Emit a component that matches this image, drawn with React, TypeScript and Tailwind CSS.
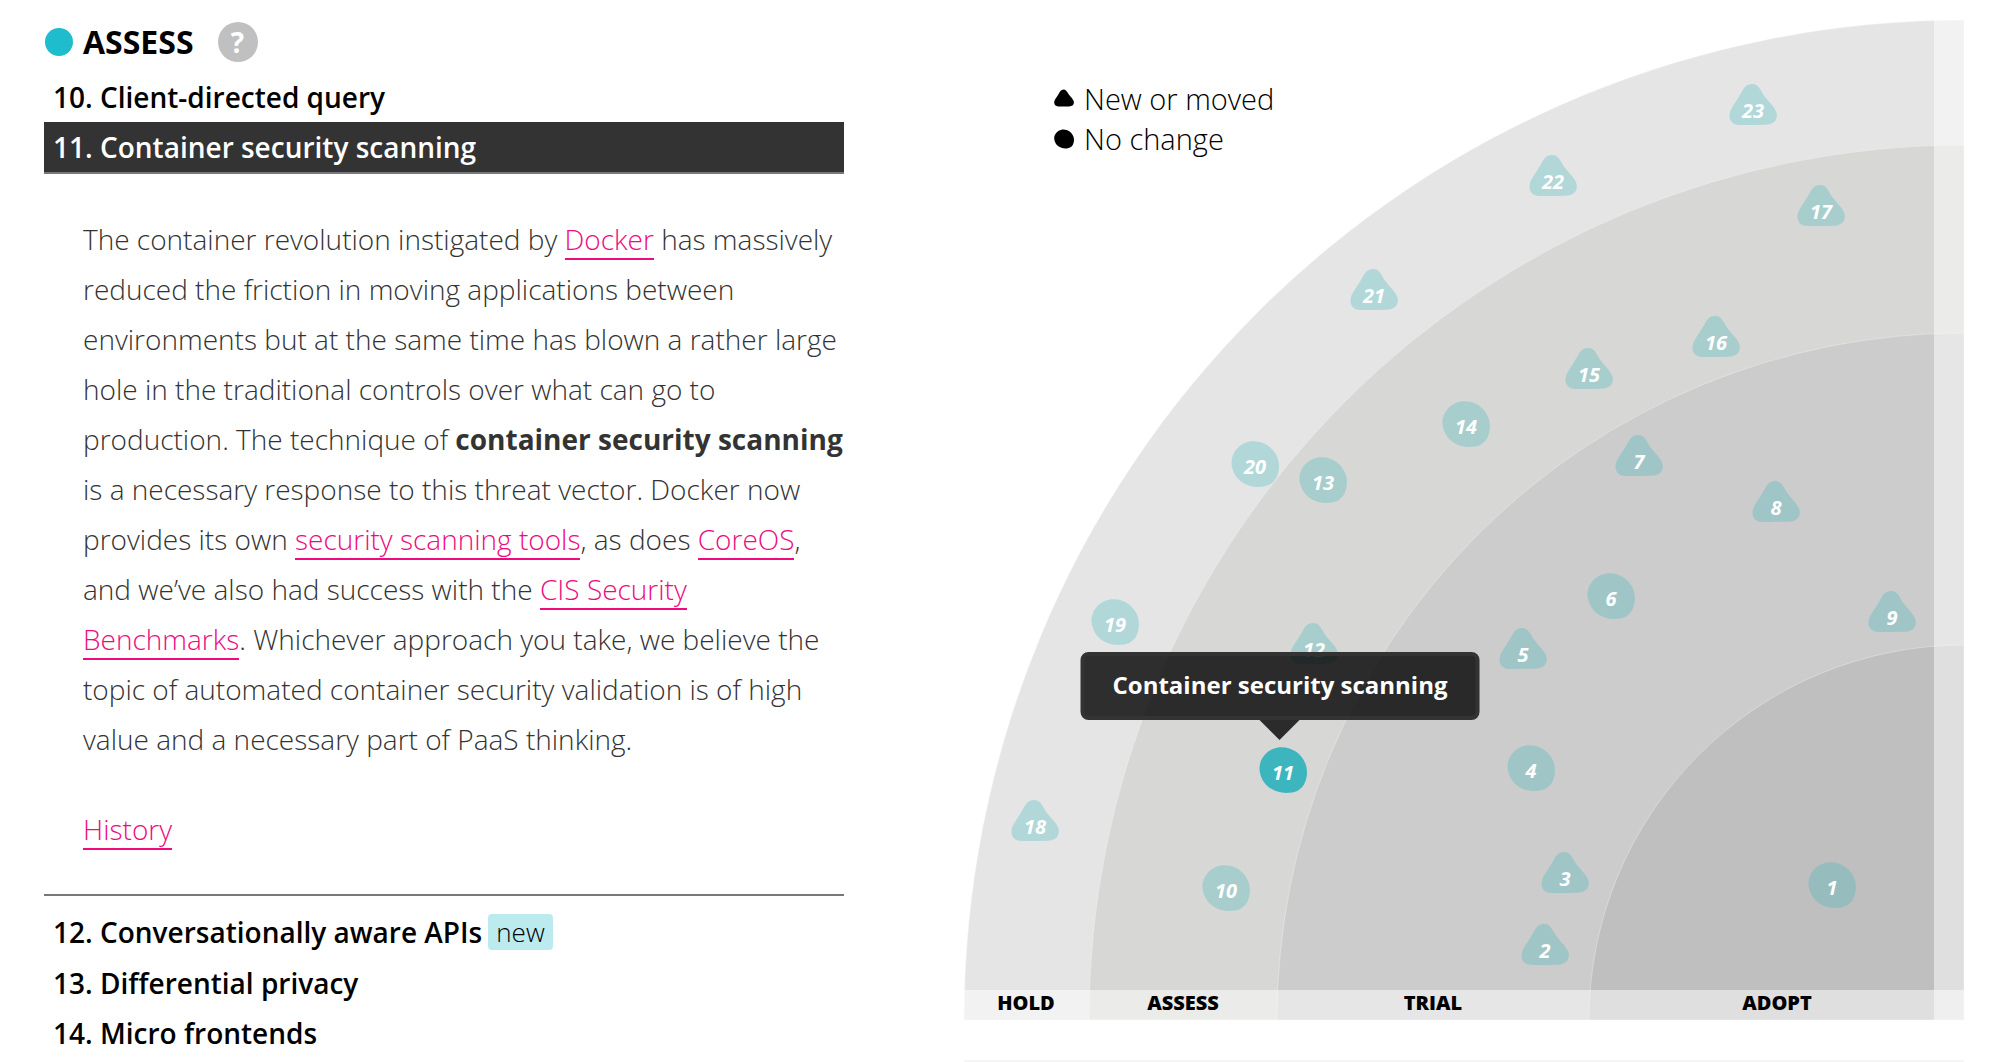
type Blip = { n: number; x: number; y: number; moved: boolean };

const blips: Blip[] = [
  { n: 1, x: 868, y: 865, moved: false },
  { n: 2, x: 581, y: 927, moved: true },
  { n: 3, x: 601, y: 855, moved: true },
  { n: 4, x: 567, y: 748, moved: false },
  { n: 5, x: 559, y: 631, moved: true },
  { n: 6, x: 647, y: 576, moved: false },
  { n: 7, x: 675, y: 438, moved: true },
  { n: 8, x: 812, y: 484, moved: true },
  { n: 9, x: 928, y: 594, moved: true },
  { n: 10, x: 262, y: 868, moved: false },
  { n: 11, x: 319, y: 750, moved: false },
  { n: 12, x: 350, y: 626, moved: true },
  { n: 13, x: 359, y: 460, moved: false },
  { n: 14, x: 502, y: 404, moved: false },
  { n: 15, x: 625, y: 351, moved: true },
  { n: 16, x: 752, y: 319, moved: true },
  { n: 17, x: 857, y: 188, moved: true },
  { n: 18, x: 71, y: 803, moved: true },
  { n: 19, x: 151, y: 602, moved: false },
  { n: 20, x: 291, y: 444, moved: false },
  { n: 21, x: 410, y: 272, moved: true },
  { n: 22, x: 589, y: 158, moved: true },
  { n: 23, x: 789, y: 87, moved: true },
];

const rings = [
  { label: "HOLD", r: 1000, fill: "#e5e5e5", x: 62 },
  { label: "ASSESS", r: 875, fill: "#d7d7d5", x: 219 },
  { label: "TRIAL", r: 687, fill: "#cccccc", x: 469 },
  { label: "ADOPT", r: 375, fill: "#bfbfbf", x: 813 },
];

const TRIANGLE =
  "M23 0C27 0 30 3.5 32 7.5C36 15 41 18.5 45 24.5C47 27.5 47.5 30 47.3 32C46.8 37.5 43 40.6 36 40.7C27 40.9 18 41 10 40.9C3 40.8 0 37 0 31.5C0 28 1.5 25 3.5 22C8 15 10 12 13 6.5C15.5 2 18.5 0 23 0Z";
const CIRCLE =
  "M420.084,282.092c-1.073,0-2.16,0.103-3.243,0.313c-6.912,1.345-13.188,8.587-11.423,16.874c1.732,8.141,8.632,13.711,17.806,13.711c0.025,0,0.052,0,0.074-0.003c0.551-0.025,1.395-0.011,2.225-0.109c4.404-0.534,8.148-2.218,10.069-6.487c1.747-3.886,2.114-7.993,0.913-12.118C434.379,286.944,427.494,282.092,420.084,282.092";

function Shape({ moved }: { moved: boolean }) {
  return moved ? (
    <path d={TRIANGLE} transform="translate(-23.5 -23)" />
  ) : (
    <path d={CIRCLE} transform="scale(1.48) translate(-421 -297.5)" />
  );
}

function RadarBlip({ blip }: { blip: Blip }) {
  const active = blip.n === 11;
  return (
    <a href={"#blip-" + blip.n}>
      <g transform={`translate(${blip.x} ${blip.y})`}>
        <g fill="#3db5be" fillOpacity={active ? 1 : 0.3}>
          <Shape moved={blip.moved} />
        </g>
        <text y={blip.moved ? 11 : 10} textAnchor="middle" className="fill-white text-[20px] font-bold italic">
          {blip.n}
        </text>
      </g>
    </a>
  );
}

function Radar() {
  return (
    <svg viewBox="0 0 1000 1000" className="block w-full" aria-label="Techniques radar">
      {rings.map((ring) => (
        <path
          key={ring.label}
          d={`M${1000 - ring.r} 1000A${ring.r} ${ring.r} 0 0 1 1000 ${1000 - ring.r}V1000Z`}
          fill={ring.fill}
          stroke="#fff"
          strokeOpacity="0.3"
        />
      ))}
      <rect x="970" y="0" width="30" height="1000" fill="#fff" fillOpacity="0.5" />
      <rect x="0" y="970" width="1000" height="30" fill="#fff" fillOpacity="0.5" />
      {rings.map((ring) => (
        <text key={ring.label} x={ring.x} y="990" textAnchor="middle" className="fill-black text-[20px] font-extrabold">
          {ring.label}
        </text>
      ))}
      {blips.map((blip) => (
        <RadarBlip key={blip.n} blip={blip} />
      ))}
    </svg>
  );
}

function LegendRow({ moved, label }: { moved: boolean; label: string }) {
  return (
    <li className="flex items-center gap-2.5">
      <svg viewBox="-24 -24 48 48" className="size-5" aria-hidden="true">
        <Shape moved={moved} />
      </svg>
      {label}
    </li>
  );
}

function Inline({ children }: { children: string }) {
  return (
    <a href="#more" className="border-b-2 border-[#ee0b7f] text-[#ee0b7f]">
      {children}
    </a>
  );
}

function Item({ n, name, isNew = false }: { n: number; name: string; isNew?: boolean }) {
  return (
    <li>
      <a href={"#blip-" + n} className="flex items-center gap-1.5 px-[9px] font-semibold leading-[50px]">
        {n}. {name}
        {isNew && (
          <span className="my-2 rounded bg-[#bbebef] px-2 text-[26px] font-light leading-9">new</span>
        )}
      </a>
    </li>
  );
}

export default function App() {
  return (
    <main className="grid grid-cols-[4fr_5fr] gap-[120px] overflow-hidden bg-white pl-11 pr-9 font-['Open_Sans',sans-serif] text-[28px] text-black">
      <section>
        <h2 className="flex items-center pt-[22px] text-[32px] font-bold leading-10">
          <span className="ml-px mr-2.5 size-7 rounded-full bg-[#1ebccd]" />
          ASSESS
          <button
            type="button"
            aria-label="About this ring"
            className="ml-6 size-10 rounded-full bg-[#c0c0c0] text-center text-[28px] font-bold leading-10 text-white"
          >
            ?
          </button>
        </h2>
        <ul className="pt-[10px]">
          <Item n={10} name="Client-directed query" />
          <li className="border-b-2 border-[#77787b]">
            <a
              href="#blip-11"
              className="block border-b-2 border-[#77787b] bg-[#333] px-[9px] font-semibold leading-[50px] text-white"
            >
              11. Container security scanning
            </a>
            <div className="pb-10 pl-[39px] pt-10 font-light leading-[50px] text-[#333]">
              <p>
                The container revolution instigated by <Inline>Docker</Inline> has massively reduced the friction in
                moving applications between environments but at the same time has blown a rather large hole in the
                traditional controls over what can go to production. The technique of{" "}
                <strong className="font-bold">container security scanning</strong> is a necessary response to this
                threat vector. Docker now provides its own <Inline>security scanning tools</Inline>, as does{" "}
                <Inline>CoreOS</Inline>, and we’ve also had success with the <Inline>CIS Security Benchmarks</Inline>.
                Whichever approach you take, we believe the topic of automated container security validation is of
                high value and a necessary part of PaaS thinking.
              </p>
              <p className="mt-10">
                <Inline>History</Inline>
              </p>
            </div>
          </li>
          <li className="h-2.5" aria-hidden="true" />
          <Item n={12} name="Conversationally aware APIs" isNew />
          <Item n={13} name="Differential privacy" />
          <Item n={14} name="Micro frontends" />
        </ul>
      </section>
      <section className="pt-5">
        <div className="relative">
          <Radar />
          <ul className="absolute left-[9%] top-[5.9%] text-[29px] font-light leading-10">
            <LegendRow moved label="New or moved" />
            <LegendRow moved={false} label="No change" />
          </ul>
          <div
            role="tooltip"
            className="absolute left-[31.6%] top-[63.2%] -translate-x-1/2 whitespace-nowrap rounded-lg border-4 border-[#333] bg-black/80 px-7 pb-[13px] pt-[11px] text-[24px] font-bold leading-9 text-white"
          >
            Container security scanning
            <span className="absolute left-1/2 top-full mt-1 -translate-x-1/2 border-x-[20px] border-t-[20px] border-x-transparent border-t-[#2b2b2b]" />
          </div>
        </div>
        <hr className="mt-10 border-t-2 border-[#f5f5f5]" />
      </section>
    </main>
  );
}
